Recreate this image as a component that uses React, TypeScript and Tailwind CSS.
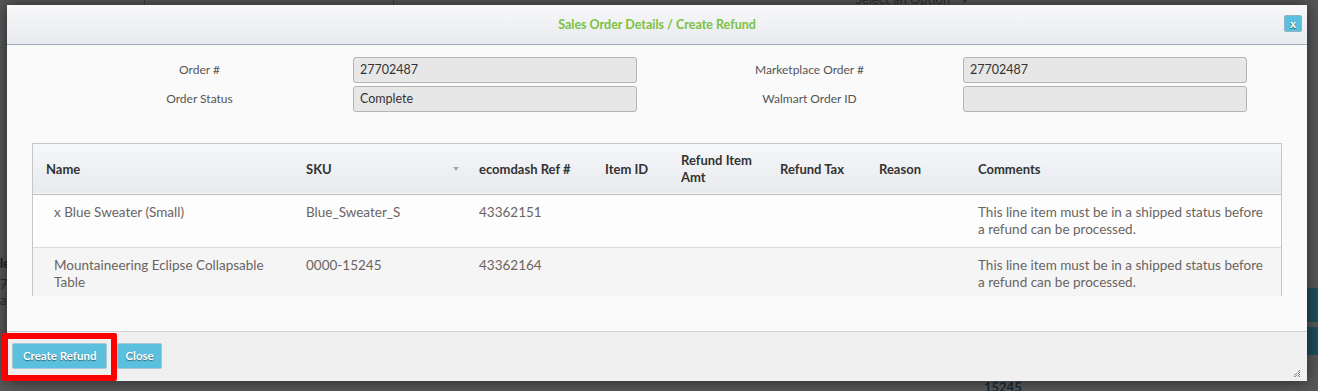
import React from "react";

const font = { fontFamily: "Lato, 'Open Sans', sans-serif" };

type Row = { name: string; sku: string; ref: string; comment: string };

const rows: Row[] = [
  {
    name: "x Blue Sweater (Small)",
    sku: "Blue_Sweater_S",
    ref: "43362151",
    comment: "This line item must be in a shipped status before a refund can be processed.",
  },
  {
    name: "Mountaineering Eclipse Collapsable Table",
    sku: "0000-15245",
    ref: "43362164",
    comment: "This line item must be in a shipped status before a refund can be processed.",
  },
];

function Field({ label, value }: { label: string; value: string }) {
  return (
    <div className="flex items-center">
      <div className="w-[307px] text-center text-[12px] text-[#555]">{label}</div>
      <div className="w-[284px] h-[26px] flex items-center pl-[6px] bg-[#e7e7e7] border border-[#b4b4b4] rounded-[3px] text-[12.5px] text-[#333]">
        {value}
      </div>
    </div>
  );
}

function ResizeGrip() {
  return (
    <svg width="9" height="9" viewBox="0 0 9 9" className="text-[#444]">
      <path d="M8 1 L1 8 M8 3 L3 8 M8 5 L5 8 M8 7 L7 8" stroke="currentColor" strokeWidth="1" strokeDasharray="1 1" />
    </svg>
  );
}

export default function App() {
  return (
    <div className="relative w-[1318px] h-[391px] overflow-hidden bg-[#575757]" style={font}>
      {/* page underneath the overlay */}
      <div className="absolute left-[144px] top-0 w-px h-[6px] bg-[#3c3c3c]" />
      <div className="absolute left-[393px] top-0 w-px h-[6px] bg-[#3c3c3c]" />
      <div className="absolute left-[855px] top-[-10px] flex items-center gap-[10px] text-[13px] text-[#2e2e2e]">
        <span>Select an Option</span>
        <span className="text-[9px]">▼</span>
      </div>
      <div className="absolute left-0 top-[254px] text-[13px] font-bold text-[#1e1e1e]">le</div>
      <div className="absolute left-0 top-[284px] w-[7px] h-px bg-[#444]" />
      <div className="absolute left-0 top-[275px] text-[13px] text-[#2a2a2a]">7</div>
      <div className="absolute left-0 top-[291px] text-[13px] text-[#2a2a2a]">a</div>
      <div className="absolute left-[1306px] top-[288px] w-[12px] h-[34px] bg-[#1f4d58]" />
      <div className="absolute left-[1306px] top-[327px] w-[12px] h-[28px] bg-[#1f4d58]" />
      <div className="absolute left-[984px] top-[378px] text-[13px] font-bold text-[#16283a]">15245</div>

      {/* modal */}
      <div className="absolute left-[7px] top-[5px] w-[1300px] h-[376px] flex flex-col bg-[#fafafa] shadow-[0_0_14px_rgba(0,0,0,0.55)]">
        <div className="relative h-[40px] shrink-0 flex items-center justify-center pt-[1px] border-b border-[#9eaab6] bg-gradient-to-b from-[#f8f8f9] to-[#e7eaee]">
          <span className="text-[12.5px] font-bold text-[#7cc142]">Sales Order Details / Create Refund</span>
          <button className="absolute right-[5px] top-[10px] w-[18px] h-[17px] flex items-center justify-center rounded-[2px] bg-[#5bc0de] border border-[#8fb3c4] text-[11px] font-bold text-white [text-shadow:0_1px_1px_rgba(0,0,0,0.6)] leading-none">
            x
          </button>
        </div>

        <div className="flex-1 flex flex-col pt-[12px]">
          <div className="flex pl-[39px] gap-[19px]">
            <div className="flex flex-col gap-[3px]">
              <Field label="Order #" value="27702487" />
              <Field label="Order Status" value="Complete" />
            </div>
            <div className="flex flex-col gap-[3px]">
              <Field label="Marketplace Order #" value="27702487" />
              <Field label="Walmart Order ID" value="" />
            </div>
          </div>

          <div className="mt-[31px] ml-[25px] w-[1250px] h-[153px] overflow-hidden border-x border-t border-[#c6c6c6]">
            <table className="w-full table-fixed border-collapse text-left">
              <colgroup>
                <col className="w-[260px]" />
                <col className="w-[173px]" />
                <col className="w-[126px]" />
                <col className="w-[76px]" />
                <col className="w-[99px]" />
                <col className="w-[99px]" />
                <col className="w-[99px]" />
                <col />
              </colgroup>
              <thead>
                <tr className="h-[50px] bg-gradient-to-b from-[#f6f7f9] to-[#e8eaee] border-b border-[#bdbdbd] text-[13px] font-bold text-[#333] leading-[17px]">
                  <th className="pl-[13px] pt-[1px] font-bold">Name</th>
                  <th className="pl-[13px] pr-[7px] pt-[1px] font-bold">
                    <div className="flex items-center justify-between">
                      <span>SKU</span>
                      <span className="w-0 h-0 border-x-[3px] border-x-transparent border-t-[4px] border-t-[#a9a9a9]" />
                    </div>
                  </th>
                  <th className="pl-[13px] pt-[1px] font-bold">ecomdash Ref #</th>
                  <th className="pl-[13px] pt-[1px] font-bold">Item ID</th>
                  <th className="pl-[13px] pt-[1px] font-bold">
                    Refund Item
                    <br />
                    Amt
                  </th>
                  <th className="pl-[13px] pt-[1px] font-bold">Refund Tax</th>
                  <th className="pl-[13px] pt-[1px] font-bold">Reason</th>
                  <th className="pl-[13px] pt-[1px] font-bold">Comments</th>
                </tr>
              </thead>
              <tbody className="text-[13.5px] text-[#6a6462] leading-[17px]">
                {rows.map((r, i) => (
                  <tr key={r.ref} className={i % 2 === 0 ? "bg-[#fdfdfd] border-b border-[#dcdcdc]" : "bg-[#f5f5f5]"}>
                    <td className="align-top pl-[21px] pr-[13px] py-[9px]">{r.name}</td>
                    <td className="align-top pl-[13px] py-[9px]">{r.sku}</td>
                    <td className="align-top pl-[13px] py-[9px]">{r.ref}</td>
                    <td className="py-[9px]" />
                    <td className="py-[9px]" />
                    <td className="py-[9px]" />
                    <td className="py-[9px]" />
                    <td className="align-top pl-[13px] pr-[15px] py-[9px] h-[52px]">{r.comment}</td>
                  </tr>
                ))}
              </tbody>
            </table>
          </div>
        </div>

        <div className="relative h-[50px] shrink-0 flex items-center gap-[10px] pl-[5px] pb-[1px] border-t border-[#d3d3d3] bg-[#f0f0f0]">
          <button className="h-[26px] px-[10px] rounded-[2px] bg-[#5bc0de] border border-[#a9c7d3] text-[11.5px] font-bold text-white [text-shadow:0_1px_1px_rgba(0,0,0,0.45)]">
            Create Refund
          </button>
          <button className="h-[26px] px-[7px] rounded-[2px] bg-[#5bc0de] border border-[#a9c7d3] text-[11.5px] font-bold text-white [text-shadow:0_1px_1px_rgba(0,0,0,0.45)]">
            Close
          </button>
          <div className="absolute right-[6px] bottom-[3px]">
            <ResizeGrip />
          </div>
        </div>
      </div>

      {/* highlight annotation */}
      <div className="absolute left-[2px] top-[333px] w-[115px] h-[48px] border-[6px] border-[#ff0000] rounded-[2px]" />
    </div>
  );
}
